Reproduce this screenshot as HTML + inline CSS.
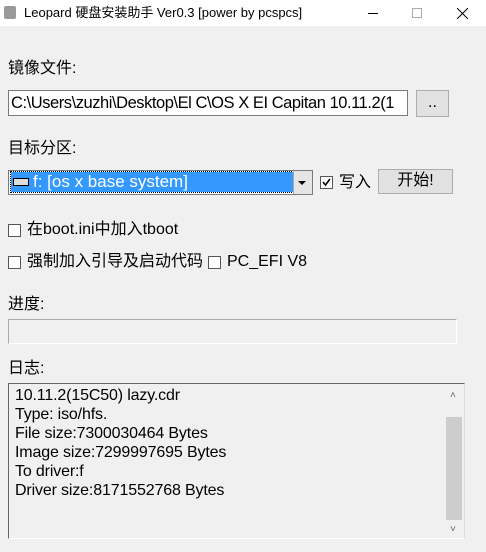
<!DOCTYPE html>
<html><head><meta charset="utf-8"><style>
*{box-sizing:border-box;margin:0;padding:0}
body{width:486px;height:552px;background:#f0f0f0;position:relative;overflow:hidden;font-family:"Liberation Sans","Noto Sans CJK SC",sans-serif;color:#000}
.a{position:absolute;white-space:nowrap}
.t{font-size:16px;line-height:20px}
.cb{position:absolute;width:13px;height:13px;border:1px solid #555;background:#fff}
.btn{position:absolute;background:#e1e1e1;border:1px solid #adadad;text-align:center;font-size:16px}
</style></head><body>
<div class="a" style="left:0;top:0;width:486px;height:26px;background:#fff"></div>
<div class="a" style="left:4px;top:6px;width:12px;height:13px;background:#999;border-radius:2px"></div>
<div class="a" style="left:24px;top:5px;font-size:13px;line-height:16px">Leopard 硬盘安装助手 Ver0.3 [power by pcspcs]</div>
<div class="a" style="left:368px;top:13px;width:10px;height:1px;background:#000"></div>
<div class="a" style="left:412px;top:8px;width:10px;height:10px;border:1px solid #aaa"></div>
<svg class="a" style="left:457px;top:8px" width="11" height="11"><path d="M0 0L11 11M11 0L0 11" stroke="#000" stroke-width="1"/></svg>

<div class="a t" style="left:8px;top:59px">镜像文件:</div>
<div class="a" style="left:8px;top:90px;width:400px;height:26px;background:#fff;border:1px solid #7a7a7a;overflow:hidden"><div class="t" style="padding:2px 0 0 2px;font-size:16.5px;letter-spacing:-0.45px">C:\Users\zuzhi\Desktop\El C\OS X EI Capitan 10.11.2(1</div></div>
<div class="btn" style="left:416px;top:90px;width:33px;height:27px;line-height:24px">..</div>

<div class="a t" style="left:8px;top:139px">目标分区:</div>
<div class="a" style="left:8px;top:170px;width:305px;height:25px;background:#fff;border:1px solid #7a7a7a"></div>
<div class="a" style="left:11px;top:172px;width:282px;height:20px;background:#3399ff;outline:1px dotted #000"></div>
<div class="a" style="left:13px;top:178px;width:16px;height:8px;border:1px solid #000;background:#ddd"></div>
<div class="a t" style="left:33px;top:172px;color:#fff;font-size:17px">f: [os x base system]</div>
<div class="a" style="left:293px;top:171px;width:19px;height:23px;background:#e5e5e5;border-left:1px solid #aaa"></div>
<div class="a" style="left:298px;top:181px;width:0;height:0;border-left:4px solid transparent;border-right:4px solid transparent;border-top:4px solid #000"></div>
<div class="cb" style="left:320px;top:176px"><svg width="11" height="11" style="position:absolute;left:0;top:0"><path d="M2 5L4.5 8L9 2" stroke="#000" stroke-width="1.6" fill="none"/></svg></div>
<div class="a t" style="left:339px;top:173px">写入</div>
<div class="btn" style="left:378px;top:169px;width:75px;height:25px;line-height:22px">开始!</div>

<div class="cb" style="left:8px;top:224px"></div>
<div class="a t" style="left:27px;top:220px">在boot.ini中加入tboot</div>
<div class="cb" style="left:8px;top:256px"></div>
<div class="a t" style="left:27px;top:252px">强制加入引导及启动代码</div>
<div class="cb" style="left:208px;top:256px"></div>
<div class="a t" style="left:227px;top:252px">PC_EFI V8</div>

<div class="a t" style="left:8px;top:295px">进度:</div>
<div class="a" style="left:8px;top:319px;width:449px;height:25px;border:1px solid #aaa;border-right-color:#fff;border-bottom-color:#fff"></div>

<div class="a t" style="left:8px;top:359px">日志:</div>
<div class="a" style="left:8px;top:383px;width:457px;height:156px;border:1px solid #666;border-right-color:#ddd;border-bottom-color:#fff"></div>
<div class="a" style="left:446px;top:385px;width:17px;height:152px;background:#f0f0f0"></div>
<div class="a" style="left:446px;top:417px;width:16px;height:103px;background:#cdcdcd"></div>
<div class="a" style="left:450px;top:390px;font-size:10px;color:#666">˄</div>
<div class="a" style="left:450px;top:524px;font-size:10px;color:#666">˅</div>
<div class="a" style="left:15px;top:386px;font-size:16px;line-height:19px;letter-spacing:-0.15px">10.11.2(15C50) lazy.cdr<br>Type: iso/hfs.<br>File size:7300030464 Bytes<br>Image size:7299997695 Bytes<br>To driver:f<br>Driver size:8171552768 Bytes</div>
</body></html>
